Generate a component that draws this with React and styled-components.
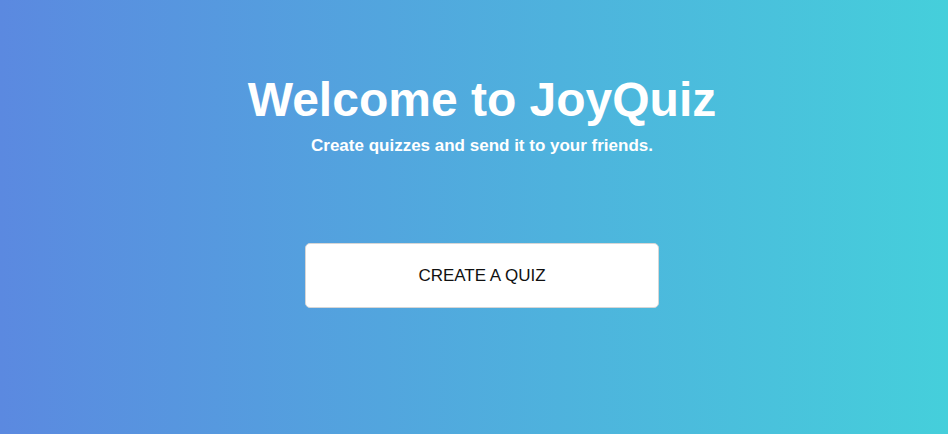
import React from "react"
import styled, { createGlobalStyle } from "styled-components"

const GlobalStyle = createGlobalStyle`
  html, body {
    margin: 0;
    padding: 0;
  }
  body {
    font-family: "Liberation Sans", Arial, sans-serif;
  }
`

const App = () => {
  return (
    <>
      <GlobalStyle />
      <Page>
        <Hero>
          <Title>Welcome to JoyQuiz</Title>
          <Subtitle>Create quizzes and send it to your friends.</Subtitle>
        </Hero>
        <CreateButton>CREATE A QUIZ</CreateButton>
      </Page>
    </>
  )
}

const Page = styled.div`
  height: 434px;
  background: linear-gradient(to right, #5b89e0, #45cfdb);
  display: flex;
  flex-direction: column;
  align-items: center;
  padding: 72px 0 0 16px;
  box-sizing: border-box;
`

const Hero = styled.div`
  text-align: center;
  color: #fff;
`

const Title = styled.h1`
  font-size: 48px;
  font-weight: 700;
  line-height: 56px;
  margin: 0;
`

const Subtitle = styled.p`
  font-size: 17px;
  font-weight: 700;
  line-height: 20px;
  margin: 8px 0 0;
`

const CreateButton = styled.button`
  margin-top: 87px;
  width: 354px;
  height: 65px;
  background: #fff;
  border: 1px solid #d6d6d6;
  border-radius: 5px;
  font-family: "Liberation Sans", Arial, sans-serif;
  font-size: 17px;
  color: #111;
  cursor: pointer;
`

export default App
